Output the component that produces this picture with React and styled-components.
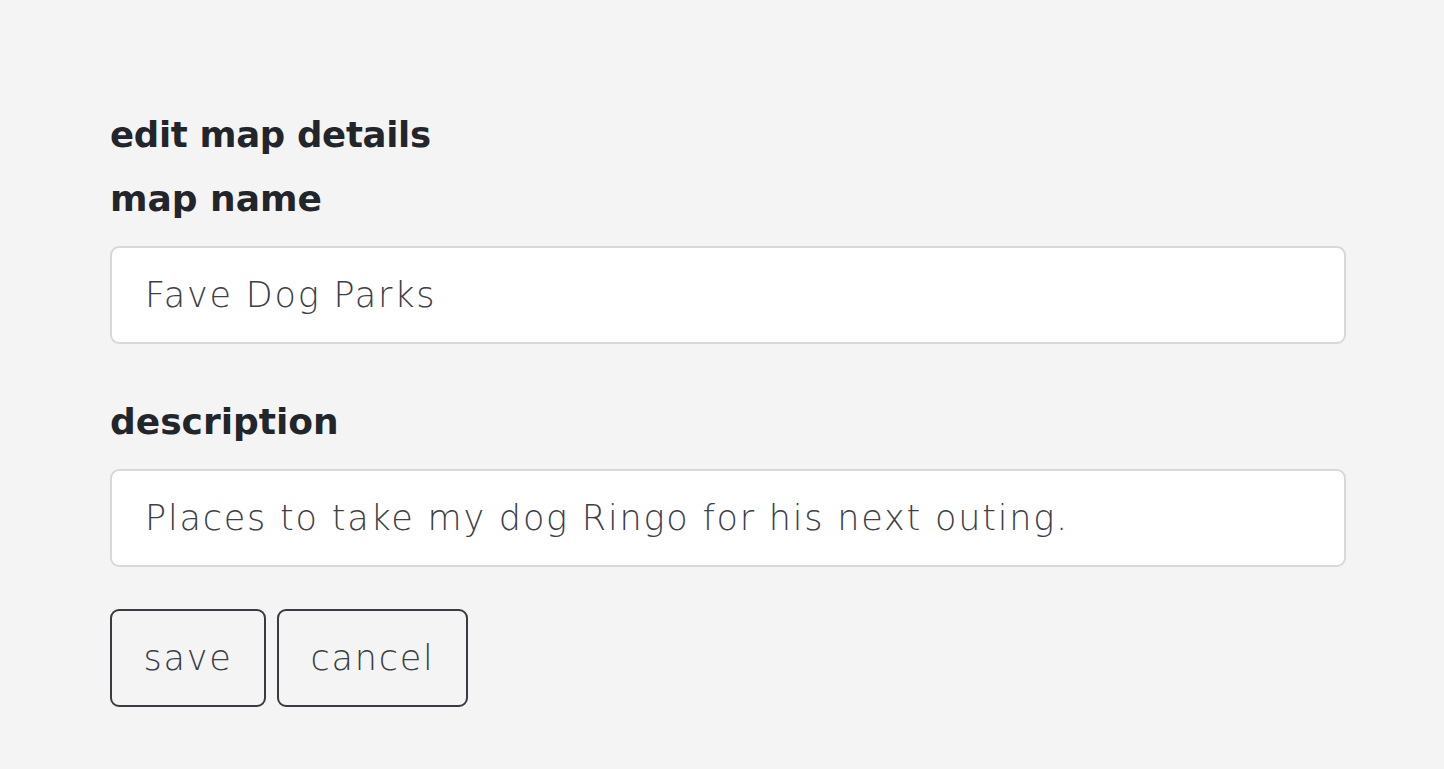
import React from "react";
import styled, { createGlobalStyle } from "styled-components";

const Global = createGlobalStyle`
  html, body { margin: 0; padding: 0; background: #f4f4f4; }
  body { font-family: "DejaVu Sans", "Inter", sans-serif; color: #1f2226; }
`;

const Page = styled.div`
  padding: 113px 0 0 110px;
  width: 1236px;
`;

const Heading = styled.h2`
  margin: 0 0 21px;
  font-size: 35.5px;
  line-height: 43px;
  font-weight: 700;
  letter-spacing: -0.3px;
  color: #22252a;
`;

const Label = styled.label`
  display: block;
  margin: ${(p) => p.$top || 0}px 0 26px;
  font-size: 36px;
  line-height: 43px;
  font-weight: 700;
  color: #22252a;
`;

const Input = styled.input`
  display: block;
  box-sizing: border-box;
  width: 1236px;
  height: 98px;
  padding: 0 33px;
  border: 2px solid #d6d8dc;
  border-radius: 9px;
  background: #fff;
  font-family: "DejaVu Sans", "Inter", sans-serif;
  font-size: 35px;
  font-weight: 200;
  letter-spacing: 1.8px;
  color: #3d4047;
  outline: none;
`;

const Actions = styled.div`
  display: flex;
  gap: 11px;
  margin-top: 42px;
`;

const Button = styled.button`
  box-sizing: border-box;
  height: 98px;
  width: ${(p) => p.$w}px;
  border: 2px solid #3a3b40;
  border-radius: 9px;
  background: transparent;
  font-family: "DejaVu Sans", "Inter", sans-serif;
  font-size: 35px;
  font-weight: 200;
  letter-spacing: 1.8px;
  color: #3a3d44;
  padding: 0;
  cursor: pointer;
`;

export default function App() {
  return (
    <>
      <Global />
      <Page>
        <Heading>edit map details</Heading>
        <Label>map name</Label>
        <Input defaultValue="Fave Dog Parks" />
        <Label $top={56}>description</Label>
        <Input defaultValue="Places to take my dog Ringo for his next outing." />
        <Actions>
          <Button $w={156}>save</Button>
          <Button $w={191}>cancel</Button>
        </Actions>
      </Page>
    </>
  );
}
